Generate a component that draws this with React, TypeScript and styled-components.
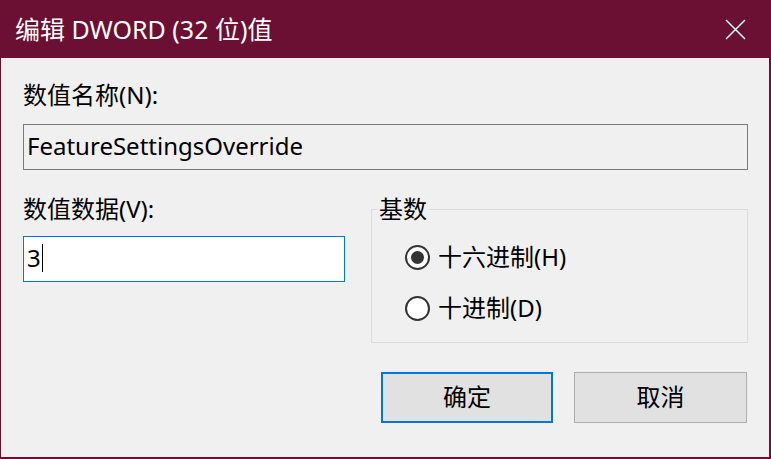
import * as React from "react";
import styled, { createGlobalStyle } from "styled-components";

const colors = {
  frame: "#6b0f33",
  face: "#f0f0f0",
  accent: "#0078d7",
  text: "#000000",
};

const GlobalStyle = createGlobalStyle`
  html, body {
    margin: 0;
    padding: 0;
  }

  body {
    width: 771px;
    height: 459px;
    overflow: hidden;
    font-family: "Segoe UI", "Noto Sans", "Noto Sans CJK SC", sans-serif;
    color: ${colors.text};
  }
`;

const Window = styled.div`
  box-sizing: border-box;
  width: 771px;
  height: 459px;
  display: flex;
  flex-direction: column;
  padding: 0 2px 2px 1px;
  background: ${colors.frame};
`;

const TitleBar = styled.div`
  height: 58px;
  flex: none;
  display: flex;
  align-items: center;
  justify-content: space-between;
  padding: 0 23px 0 14px;
  color: #ffffff;
  font-size: 25px;
  line-height: 30px;
`;

const CloseIcon = styled.svg`
  width: 21px;
  height: 21px;
  display: block;
`;

const Body = styled.div`
  flex: 1;
  display: flex;
  flex-direction: column;
  padding: 22px 21px 0 22px;
  background: ${colors.face};
  font-size: 24px;
  line-height: 30px;
`;

const Label = styled.div`
  height: 30px;
`;

const TextBox = styled.div<{ $focused?: boolean; $readOnly?: boolean }>`
  box-sizing: border-box;
  height: 46px;
  display: flex;
  align-items: center;
  padding: 0 3px 3px;
  border: 1px solid ${(p) => (p.$focused ? colors.accent : "#7a7a7a")};
  background: ${(p) => (p.$readOnly ? colors.face : "#ffffff")};
  white-space: nowrap;
`;

const Caret = styled.span`
  display: inline-block;
  width: 1px;
  height: 28px;
  margin-left: 1px;
  background: #000000;
`;

const NameBox = styled(TextBox)`
  margin-top: 14px;
`;

const Row = styled.div`
  display: grid;
  grid-template-columns: 322px 377px;
  column-gap: 26px;
  margin-top: 24px;
`;

const Column = styled.div`
  display: flex;
  flex-direction: column;
`;

const ValueBox = styled(TextBox)`
  margin-top: 12px;
`;

const GroupBox = styled.fieldset`
  margin: 0;
  min-width: 0;
  padding: 18px 0 19px 33px;
  border: 1px solid #dcdcdc;
  display: flex;
  flex-direction: column;
  gap: 21px;
`;

const Legend = styled.legend`
  padding: 0 2px;
  margin-left: -28px;
  line-height: 30px;
`;

const RadioRow = styled.label`
  display: flex;
  align-items: center;
  height: 30px;
  gap: 8px;
`;

const RadioCircle = styled.span<{ $checked?: boolean }>`
  box-sizing: border-box;
  width: 25px;
  height: 25px;
  flex: none;
  border-radius: 50%;
  border: 2px solid #333333;
  background: #ffffff;
  display: flex;
  align-items: center;
  justify-content: center;

  &::after {
    content: "";
    width: 13px;
    height: 13px;
    border-radius: 50%;
    background: ${(p) => (p.$checked ? "#333333" : "transparent")};
  }
`;

const ButtonRow = styled.div`
  display: flex;
  justify-content: flex-end;
  gap: 21px;
  margin-top: 29px;
  padding-right: 1px;
`;

const Button = styled.button<{ $primary?: boolean }>`
  box-sizing: border-box;
  width: ${(p) => (p.$primary ? 172 : 173)}px;
  height: 51px;
  padding: 0 0 2px;
  font: inherit;
  color: ${colors.text};
  background: #e1e1e1;
  border: ${(p) => (p.$primary ? `2px solid ${colors.accent}` : "1px solid #adadad")};
`;

const Radio = ({ checked, label }: { checked?: boolean; label: string }) => (
  <RadioRow>
    <RadioCircle $checked={checked} />
    {label}
  </RadioRow>
);

export default function App() {
  return (
    <>
      <GlobalStyle />
      <Window>
        <TitleBar>
          <span>编辑 DWORD (32 位)值</span>
          <CloseIcon viewBox="0 0 21 21">
            <path d="M1 1 L20 20 M20 1 L1 20" stroke="#ffffff" strokeWidth="1.5" fill="none" />
          </CloseIcon>
        </TitleBar>
        <Body>
          <Label>数值名称(N):</Label>
          <NameBox $readOnly>FeatureSettingsOverride</NameBox>
          <Row>
            <Column>
              <Label>数值数据(V):</Label>
              <ValueBox $focused>
                3<Caret />
              </ValueBox>
            </Column>
            <GroupBox>
              <Legend>基数</Legend>
              <Radio checked label="十六进制(H)" />
              <Radio label="十进制(D)" />
            </GroupBox>
          </Row>
          <ButtonRow>
            <Button $primary>确定</Button>
            <Button>取消</Button>
          </ButtonRow>
        </Body>
      </Window>
    </>
  );
}
